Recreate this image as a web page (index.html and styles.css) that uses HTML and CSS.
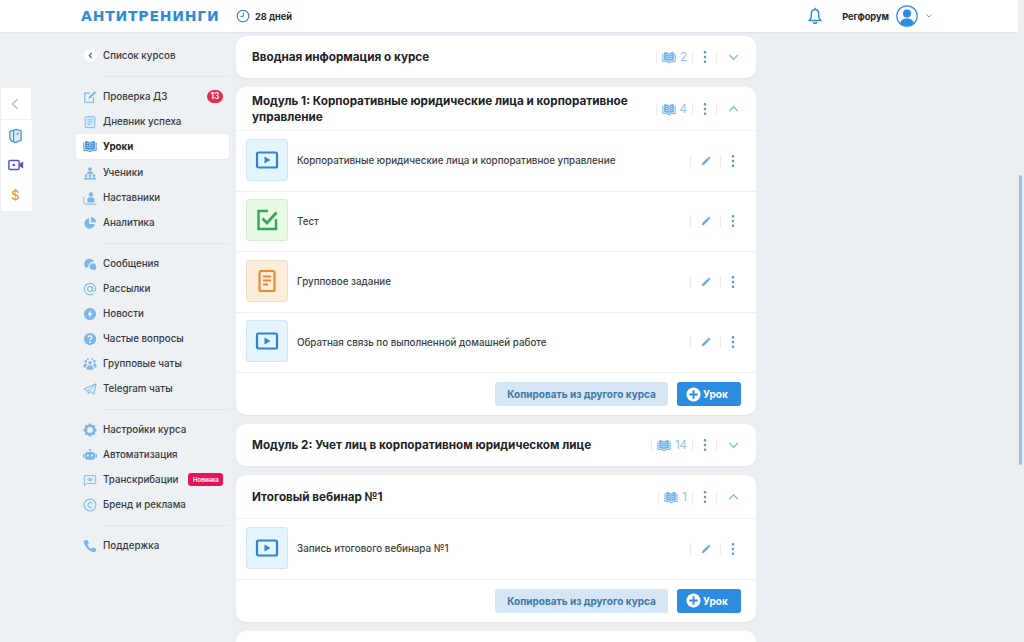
FILE: index.html
```html
<!DOCTYPE html>
<html lang="ru">
<head>
<meta charset="utf-8">
<title>Антитренинги</title>
<link rel="stylesheet" href="styles.css">
</head>
<body>
<svg class="defs" width="0" height="0" aria-hidden="true">
  <symbol id="i-book" viewBox="0 0 16 16"><path d="M8 4C6.500 2.600 4.500 2.300 2.500 2.500V12C4.500 11.800 6.500 12.100 8 13.400C9.500 12.100 11.500 11.800 13.500 12V2.500C11.500 2.300 9.500 2.600 8 4Z" fill="currentColor"/><path d="M8 4V13.400M4.200 5H6.500M4.200 7.300H6.500M4.200 9.600H6.500M9.500 5H11.800M9.500 7.300H11.800M9.500 9.600H11.800" stroke="#fff" stroke-width=".7" fill="none"/><path d="M1 4V13.300C3.500 13 6 13.300 8 14.500C10 13.300 12.500 13 15 13.300V4" stroke="currentColor" stroke-width="1.100" fill="none"/></symbol>
  <symbol id="i-dots" viewBox="0 0 4 16"><circle cx="2" cy="2.500" r="1.400" fill="currentColor"/><circle cx="2" cy="8" r="1.400" fill="currentColor"/><circle cx="2" cy="13.500" r="1.400" fill="currentColor"/></symbol>
  <symbol id="i-down" viewBox="0 0 12 8"><path d="M1.500 1.500L6 6L10.500 1.500" fill="none" stroke="currentColor" stroke-width="1.500" stroke-linecap="round"/></symbol>
  <symbol id="i-up" viewBox="0 0 12 8"><path d="M1.500 6.500L6 2L10.500 6.500" fill="none" stroke="currentColor" stroke-width="1.500" stroke-linecap="round"/></symbol>
  <symbol id="i-pen" viewBox="0 0 12 12"><path d="M8.800 1.500L10.500 3.200L4 9.700L1.800 10.200L2.300 8Z" fill="currentColor"/><path d="M7.500 2.800L9.200 4.500" stroke="#fff" stroke-width=".6"/></symbol>
  <symbol id="i-video" viewBox="0 0 24 20"><rect x="2" y="2.500" width="20" height="15" rx="1.500" fill="none" stroke="currentColor" stroke-width="2.200"/><path d="M9.500 6.500L15.500 10L9.500 13.500Z" fill="currentColor"/></symbol>
  <symbol id="i-test" viewBox="0 0 24 24"><path d="M13 3H3.500V21H21V11" fill="none" stroke="currentColor" stroke-width="2.400"/><path d="M7.500 10.500L12 15L21.500 4.500" fill="none" stroke="currentColor" stroke-width="2.800"/></symbol>
  <symbol id="i-task" viewBox="0 0 18 24"><rect x="1.500" y="2" width="15" height="20" rx="1.500" fill="none" stroke="currentColor" stroke-width="2.200"/><path d="M5 7.500H13M5 11.500H13M5 15.500H10" stroke="currentColor" stroke-width="1.800"/></symbol>
</svg>

<header class="topbar">
  <div class="brand">
    <span class="logo">АНТИТРЕНИНГИ</span>
    <svg class="clock" viewBox="0 0 14 14"><circle cx="7" cy="7" r="5.800" fill="none" stroke="currentColor" stroke-width="1.100"/><path d="M7.300 3.500V7.400H4.500" fill="none" stroke="currentColor" stroke-width="1"/></svg>
    <span class="days">28 дней</span>
  </div>
  <div class="account">
    <svg class="bell" viewBox="0 0 14 18"><path d="M7 2.500C4.500 2.500 3.300 4.500 3.300 6.800V10.300L1.300 13.500H12.700L10.700 10.300V6.800C10.700 4.500 9.500 2.500 7 2.500Z" fill="none" stroke="currentColor" stroke-width="1.400"/><path d="M5.300 15C5.600 16 6.200 16.500 7 16.500S8.400 16 8.700 15M7 .8V2.500" fill="none" stroke="currentColor" stroke-width="1.400"/></svg>
    <span class="user">Регфорум</span>
    <svg class="avatar" viewBox="0 0 22 22"><circle cx="11" cy="11" r="10.200" fill="#fff" stroke="#2b8ce0" stroke-width="1.200"/><circle cx="11" cy="8.500" r="4" fill="#2b8ce0"/><path d="M4 18.500C5 14.500 8 13.500 11 13.500S17 14.500 18 18.500C14.500 21.500 7.500 21.500 4 18.500Z" fill="#2b8ce0"/></svg>
    <svg class="caret"><use href="#i-down"/></svg>
  </div>
</header>

<div class="page">
  <div class="left">
    <aside class="rail">
      <div class="rail-back">
        <svg class="rail-arrow" viewBox="0 0 8 12"><path d="M6.500 1L1.500 6L6.500 11" fill="none" stroke="currentColor" stroke-width="1.300"/></svg>
      </div>
      <div class="rail-tools">
        <span class="rail-cell"><svg class="rail-ico blue" viewBox="0 0 16 18"><path d="M2 4.500L9 2.500L14 4V14L8 16.500L3.500 15L2 12Z" fill="#d9ebfa" stroke="currentColor" stroke-width="1.200"/><path d="M6 3.500V15.500M9.500 8L11 6" stroke="currentColor" stroke-width="1.200" fill="none"/></svg></span>
        <span class="rail-cell"><svg class="rail-ico violet" viewBox="0 0 18 14"><rect x="1" y="2" width="11.500" height="10" rx="1.200" fill="none" stroke="currentColor" stroke-width="1.600"/><circle cx="6.500" cy="7" r="1.500" fill="currentColor"/><path d="M13 5.500L17 3V11L13 8.500Z" fill="currentColor"/></svg></span>
        <span class="rail-cell rail-dollar">$</span>
      </div>
    </aside>

    <nav class="sidebar">
      <a class="nav-item">
        <span class="back-dot"><svg class="back-arrow" viewBox="0 0 6 8"><path d="M4.500 1L1.500 4L4.500 7" fill="none" stroke="currentColor" stroke-width="1.400"/></svg></span>
        <span class="nav-text">Список курсов</span>
      </a>
      <div class="divider"></div>

      <a class="nav-item">
        <svg class="nav-ico" viewBox="0 0 16 16"><path d="M12 8.500V14H2V3.500H8" fill="none" stroke="currentColor" stroke-width="1.300"/><path d="M13.500 1.500L15 3L8.500 9.500L6.300 10L6.800 7.800Z" fill="currentColor"/></svg>
        <span class="nav-text">Проверка ДЗ</span>
        <span class="count-badge">13</span>
      </a>
      <a class="nav-item">
        <svg class="nav-ico" viewBox="0 0 16 16"><rect x="2.500" y="2" width="11" height="12.500" rx="1" fill="#d9ebfa" stroke="currentColor" stroke-width="1.100"/><path d="M5 5.500H11M5 8H11M5 10.500H9" stroke="currentColor" stroke-width="1"/></svg>
        <span class="nav-text">Дневник успеха</span>
      </a>
      <a class="nav-item active">
        <svg class="nav-ico strong"><use href="#i-book"/></svg>
        <span class="nav-text">Уроки</span>
      </a>
      <a class="nav-item">
        <svg class="nav-ico" viewBox="0 0 16 16"><circle cx="8" cy="3.500" r="2.200" fill="currentColor"/><path d="M4.500 9C4.500 7 6 6.300 8 6.300S11.500 7 11.500 9Z" fill="currentColor"/><circle cx="3.500" cy="11" r="1.500" fill="currentColor"/><circle cx="8" cy="11" r="1.500" fill="currentColor"/><circle cx="12.500" cy="11" r="1.500" fill="currentColor"/><path d="M1 15.500C1 13.500 2 13 3.500 13S6 13.500 6 15.500ZM5.700 15.500C5.700 13.500 6.500 13 8 13S10.300 13.500 10.300 15.500ZM10 15.500C10 13.500 11 13 12.500 13S15 13.500 15 15.500Z" fill="currentColor"/></svg>
        <span class="nav-text">Ученики</span>
      </a>
      <a class="nav-item">
        <svg class="nav-ico" viewBox="0 0 16 16"><circle cx="9" cy="4" r="2.500" fill="currentColor"/><path d="M5 13V9.500C5 8 6.800 7 9 7S13 8 13 9.500V13Z" fill="currentColor"/><path d="M1 7V13.500C1 14.500 2 15 3 15H15" fill="none" stroke="currentColor" stroke-width="1.100"/></svg>
        <span class="nav-text">Наставники</span>
      </a>
      <a class="nav-item">
        <svg class="nav-ico" viewBox="0 0 16 16"><path d="M7 2.500A6 6 0 1 0 13.500 9H7Z" fill="currentColor"/><path d="M9 1A6 6 0 0 1 15 7H9Z" fill="currentColor"/></svg>
        <span class="nav-text">Аналитика</span>
      </a>
      <div class="divider"></div>

      <a class="nav-item">
        <svg class="nav-ico" viewBox="0 0 16 16"><path d="M1.500 8C1.500 4.500 4 2 7.500 2C10 2 12 3.500 12.500 5.500C9 5.300 6.300 7.500 6 11.500L3 12.500C2 11.300 1.500 9.800 1.500 8Z" fill="currentColor"/><path d="M7.500 11C7.500 8.500 9.500 7 11.500 7S15 8.500 15 11V14.500H11C9 14.500 7.500 13 7.500 11Z" fill="currentColor"/></svg>
        <span class="nav-text">Сообщения</span>
      </a>
      <a class="nav-item">
        <svg class="nav-ico" viewBox="0 0 16 16"><circle cx="8" cy="8" r="2.800" fill="none" stroke="currentColor" stroke-width="1.200"/><path d="M10.800 5.500V9C10.800 11 14.500 11 14.500 8A6.500 6.500 0 1 0 11.500 13.500" fill="none" stroke="currentColor" stroke-width="1.200"/></svg>
        <span class="nav-text">Рассылки</span>
      </a>
      <a class="nav-item">
        <svg class="nav-ico" viewBox="0 0 16 16"><circle cx="8" cy="8" r="7" fill="currentColor"/><path d="M8.700 3.500L5.500 8.800H7.700L7.200 12.500L10.500 7.200H8.200Z" fill="#fff"/></svg>
        <span class="nav-text">Новости</span>
      </a>
      <a class="nav-item">
        <svg class="nav-ico" viewBox="0 0 16 16"><circle cx="8" cy="8" r="7" fill="currentColor"/><path d="M5.800 6.300C5.800 5 6.800 4.300 8 4.300S10.200 5 10.200 6.300C10.200 7.800 8 7.800 8 9.500" fill="none" stroke="#fff" stroke-width="1.400"/><circle cx="8" cy="11.600" r="1" fill="#fff"/></svg>
        <span class="nav-text">Частые вопросы</span>
      </a>
      <a class="nav-item">
        <svg class="nav-ico" viewBox="0 0 16 16"><circle cx="8" cy="6.500" r="2" fill="currentColor"/><circle cx="3" cy="5" r="1.500" fill="currentColor"/><circle cx="13" cy="5" r="1.500" fill="currentColor"/><circle cx="5.500" cy="2.500" r="1" fill="currentColor"/><circle cx="10.500" cy="2.500" r="1" fill="currentColor"/><path d="M4 14.500C4 11 5.500 9.500 8 9.500S12 11 12 14.500ZM.5 12C.5 8.500 1.500 7.500 3 7.500C3.800 7.500 4.500 8 4.800 8.500C3.800 9.500 3.300 10.500 3.200 12ZM15.500 12C15.500 8.500 14.500 7.500 13 7.500C12.200 7.500 11.500 8 11.200 8.500C12.200 9.500 12.700 10.500 12.800 12Z" fill="currentColor"/></svg>
        <span class="nav-text">Групповые чаты</span>
      </a>
      <a class="nav-item">
        <svg class="nav-ico" viewBox="0 0 16 16"><path d="M1 8L15 2L12.500 14L8 11L6 13.500L5.500 10.500Z" fill="#d9ebfa" stroke="currentColor" stroke-width="1.100" stroke-linejoin="round"/><path d="M5.500 10.500L15 2" stroke="currentColor" stroke-width="1"/></svg>
        <span class="nav-text">Telegram чаты</span>
      </a>
      <div class="divider"></div>

      <a class="nav-item">
        <svg class="nav-ico" viewBox="0 0 16 16"><circle cx="8" cy="8" r="5" fill="none" stroke="currentColor" stroke-width="3.200"/><path d="M8 .5V3M8 13V15.500M.5 8H3M13 8H15.500M2.700 2.700L4.500 4.500M11.500 11.500L13.300 13.300M2.700 13.300L4.500 11.500M11.500 4.500L13.300 2.700" stroke="currentColor" stroke-width="2.200"/></svg>
        <span class="nav-text">Настройки курса</span>
      </a>
      <a class="nav-item">
        <svg class="nav-ico" viewBox="0 0 16 16"><rect x="2" y="4.500" width="12" height="9" rx="3.500" fill="currentColor"/><circle cx="8" cy="2.500" r="1.300" fill="currentColor"/><rect x="0" y="7" width="1.500" height="4" fill="currentColor"/><rect x="14.500" y="7" width="1.500" height="4" fill="currentColor"/><circle cx="5.500" cy="8.500" r="1.100" fill="#fff"/><circle cx="10.500" cy="8.500" r="1.100" fill="#fff"/></svg>
        <span class="nav-text">Автоматизация</span>
      </a>
      <a class="nav-item">
        <svg class="nav-ico" viewBox="0 0 16 16"><path d="M1.500 3H14.500V12H4L1.500 14.500Z" fill="#e3f0fb" stroke="currentColor" stroke-width="1"/><path d="M5 7.500C6 5.800 10 5.800 11 7.500C10 9.200 6 9.200 5 7.500Z" fill="none" stroke="currentColor" stroke-width=".9"/><circle cx="8" cy="7.500" r="1" fill="currentColor"/></svg>
        <span class="nav-text">Транскрибации</span>
        <span class="new-badge">Новинка</span>
      </a>
      <a class="nav-item">
        <svg class="nav-ico" viewBox="0 0 16 16"><circle cx="8" cy="8" r="6.800" fill="#e3f0fb" stroke="currentColor" stroke-width="1.200"/><path d="M10.300 6C9.300 4.700 5.700 4.800 5.700 8S9.300 11.300 10.300 10" fill="none" stroke="currentColor" stroke-width="1.200"/></svg>
        <span class="nav-text">Бренд и реклама</span>
      </a>
      <div class="divider"></div>

      <a class="nav-item">
        <svg class="nav-ico" viewBox="0 0 16 16"><path d="M2 1.500L5 1L6.800 5L5 6.500C5.800 8.300 7.500 10 9.500 11L11 9.300L15 11L14.500 14C14.300 15 13 15.500 12 15C6.500 13.500 2.500 9.500 1 4C.7 3 1 2 2 1.500Z" fill="currentColor"/></svg>
        <span class="nav-text">Поддержка</span>
      </a>
    </nav>
  </div>

  <main class="course">
    <section class="card">
      <div class="card-head">
        <h2 class="card-title">Вводная информация о курсе</h2>
        <div class="head-tools">
          <i class="sep"></i><svg class="book"><use href="#i-book"/></svg><span class="lesson-count">2</span><i class="sep"></i>
          <span class="dots-cell"><svg class="dots"><use href="#i-dots"/></svg></span><i class="sep"></i>
          <span class="chev-cell"><svg class="chev"><use href="#i-down"/></svg></span>
        </div>
      </div>
    </section>

    <section class="card">
      <div class="card-head open">
        <h2 class="card-title">Модуль 1: Корпоративные юридические лица и корпоративное управление</h2>
        <div class="head-tools">
          <i class="sep"></i><svg class="book"><use href="#i-book"/></svg><span class="lesson-count">4</span><i class="sep"></i>
          <span class="dots-cell"><svg class="dots"><use href="#i-dots"/></svg></span><i class="sep"></i>
          <span class="chev-cell"><svg class="chev"><use href="#i-up"/></svg></span>
        </div>
      </div>
      <div class="lesson">
        <span class="thumb thumb-video"><svg class="thumb-ico"><use href="#i-video"/></svg></span>
        <span class="lesson-name">Корпоративные юридические лица и корпоративное управление</span>
        <div class="row-tools"><i class="sep"></i><span class="pen-cell"><svg class="pen"><use href="#i-pen"/></svg></span><i class="sep"></i><span class="row-dots"><svg class="dots"><use href="#i-dots"/></svg></span></div>
      </div>
      <div class="lesson">
        <span class="thumb thumb-test"><svg class="thumb-ico"><use href="#i-test"/></svg></span>
        <span class="lesson-name">Тест</span>
        <div class="row-tools"><i class="sep"></i><span class="pen-cell"><svg class="pen"><use href="#i-pen"/></svg></span><i class="sep"></i><span class="row-dots"><svg class="dots"><use href="#i-dots"/></svg></span></div>
      </div>
      <div class="lesson">
        <span class="thumb thumb-task"><svg class="thumb-ico"><use href="#i-task"/></svg></span>
        <span class="lesson-name">Групповое задание</span>
        <div class="row-tools"><i class="sep"></i><span class="pen-cell"><svg class="pen"><use href="#i-pen"/></svg></span><i class="sep"></i><span class="row-dots"><svg class="dots"><use href="#i-dots"/></svg></span></div>
      </div>
      <div class="lesson">
        <span class="thumb thumb-video"><svg class="thumb-ico"><use href="#i-video"/></svg></span>
        <span class="lesson-name">Обратная связь по выполненной домашней работе</span>
        <div class="row-tools"><i class="sep"></i><span class="pen-cell"><svg class="pen"><use href="#i-pen"/></svg></span><i class="sep"></i><span class="row-dots"><svg class="dots"><use href="#i-dots"/></svg></span></div>
      </div>
      <div class="card-foot">
        <button class="btn-copy">Копировать из другого курса</button>
        <button class="btn-add"><svg class="plus" viewBox="0 0 16 16"><circle cx="8" cy="8" r="7.500" fill="#fff"/><path d="M8 3.500V12.500M3.500 8H12.500" stroke="#2b8ce0" stroke-width="2"/></svg>Урок</button>
      </div>
    </section>

    <section class="card">
      <div class="card-head">
        <h2 class="card-title">Модуль 2: Учет лиц в корпоративном юридическом лице</h2>
        <div class="head-tools">
          <i class="sep"></i><svg class="book"><use href="#i-book"/></svg><span class="lesson-count">14</span><i class="sep"></i>
          <span class="dots-cell"><svg class="dots"><use href="#i-dots"/></svg></span><i class="sep"></i>
          <span class="chev-cell"><svg class="chev"><use href="#i-down"/></svg></span>
        </div>
      </div>
    </section>

    <section class="card">
      <div class="card-head open">
        <h2 class="card-title">Итоговый вебинар №1</h2>
        <div class="head-tools">
          <i class="sep"></i><svg class="book"><use href="#i-book"/></svg><span class="lesson-count">1</span><i class="sep"></i>
          <span class="dots-cell"><svg class="dots"><use href="#i-dots"/></svg></span><i class="sep"></i>
          <span class="chev-cell"><svg class="chev"><use href="#i-up"/></svg></span>
        </div>
      </div>
      <div class="lesson">
        <span class="thumb thumb-video"><svg class="thumb-ico"><use href="#i-video"/></svg></span>
        <span class="lesson-name">Запись итогового вебинара №1</span>
        <div class="row-tools"><i class="sep"></i><span class="pen-cell"><svg class="pen"><use href="#i-pen"/></svg></span><i class="sep"></i><span class="row-dots"><svg class="dots"><use href="#i-dots"/></svg></span></div>
      </div>
      <div class="card-foot">
        <button class="btn-copy">Копировать из другого курса</button>
        <button class="btn-add"><svg class="plus" viewBox="0 0 16 16"><circle cx="8" cy="8" r="7.500" fill="#fff"/><path d="M8 3.500V12.500M3.500 8H12.500" stroke="#2b8ce0" stroke-width="2"/></svg>Урок</button>
      </div>
    </section>

    <section class="card card-tail"></section>
  </main>
</div>
<div class="scroll-thumb"></div>
</body>
</html>
```

FILE: styles.css
```css
* { box-sizing: border-box; }
html, body { margin: 0; height: 642px; overflow: hidden; }
body {
  background: #ebeef2;
  font-family: Inter, "Noto Sans", sans-serif;
  color: #2a2f36;
  font-size: 10px;
}
.defs { position: absolute; }

/* top bar */
.topbar {
  width: 1018px;
  height: 32px;
  background: #fff;
  display: flex;
  align-items: center;
  justify-content: space-between;
  padding: 0 86px 0 81px;
  box-shadow: 0 1px 1px rgba(40, 60, 90, .05);
  position: relative;
}
.brand, .account { display: flex; align-items: center; }
.logo {
  font-family: "DejaVu Sans", sans-serif;
  font-weight: 700;
  font-size: 14px;
  letter-spacing: .8px;
  color: #2d8ad9;
  width: 139px;
  white-space: nowrap;
}
.clock { width: 14px; height: 14px; margin-left: 16px; color: #2f7fc4; }
.days { margin-left: 5px; font-size: 9.2px; font-weight: 700; color: #23272d; }
.bell { width: 14px; height: 18px; color: #2b8ce0; }
.user { margin-left: 20px; font-size: 9.2px; font-weight: 700; color: #1f2328; }
.avatar { width: 22px; height: 22px; margin-left: 7px; }
.caret { width: 6px; height: 4px; margin-left: 8px; color: #3f86c6; }

/* layout */
.page { display: flex; height: 610px; }
.left { width: 232px; height: 610px; background: #eef1f4; display: flex; flex: none; }

/* rail */
.rail { width: 31px; margin: 56px 0 0 1px; flex: none; }
.rail-back {
  height: 31px;
  width: 30px;
  padding-right: 2px;
  background: #fff;
  display: flex;
  align-items: center;
  justify-content: center;
  margin-bottom: 1px;
}
.rail-arrow { width: 8px; height: 12px; color: #b9bec4; }
.rail-tools {
  height: 91px;
  background: #fff;
  display: flex;
  flex-direction: column;
  border-radius: 0 0 2px 2px;
}
.rail-cell { height: 30px; padding-right: 2px; display: flex; align-items: center; justify-content: center; }
.rail-ico { width: 15px; height: 17px; display: block; }
.rail-ico.blue { color: #3a8ad0; }
.rail-ico.violet { color: #4c55c7; width: 16px; height: 14px; }
.rail-dollar { font-size: 13px; font-weight: 500; color: #ef9a3c; }

/* sidebar */
.sidebar { width: 153px; margin-left: 44px; padding-top: 11px; flex: none; }
.nav-item {
  display: flex;
  align-items: center;
  height: 25px;
  padding-left: 7px;
  font-size: 9.75px;
  font-weight: 500;
  color: #343a42;
  white-space: nowrap;
}
.nav-ico { width: 14px; height: 14px; color: #7db6e8; flex: none; }
.nav-ico.strong { color: #3f8fd6; }
.nav-text { margin-left: 6px; }
.nav-item.active {
  background: #fff;
  margin: -.5px 0 1.5px;
  border-radius: 3px;
  font-weight: 700;
  color: #23272d;
  box-shadow: 0 0 1px rgba(40, 60, 90, .2);
}
.back-dot {
  width: 13px;
  height: 13px;
  border-radius: 50%;
  background: #fff;
  display: flex;
  align-items: center;
  justify-content: center;
  flex: none;
  margin-left: 1px;
}
.back-arrow { width: 5px; height: 7px; color: #2f7fc4; }
.back-dot + .nav-text { margin-left: 6px; }
.divider { height: 1px; margin: 7.5px 0 7.5px 27px; background: #e2e5e9; }
.count-badge {
  margin-left: auto;
  margin-right: 6px;
  width: 16px;
  height: 13px;
  border-radius: 7px;
  background: #e6294f;
  color: #fff;
  font-size: 8.5px;
  font-weight: 600;
  line-height: 13px;
  text-align: center;
}
.new-badge {
  margin-left: 10px;
  width: 35px;
  height: 13px;
  border-radius: 3px;
  background: #e8145a;
  color: #fff;
  font-size: 6px;
  font-weight: 600;
  line-height: 13px;
  text-align: center;
}

/* course column */
.course {
  width: 520px;
  margin-left: 4px;
  padding-top: 4px;
  display: flex;
  flex-direction: column;
  gap: 9px;
  flex: none;
}
.card {
  background: #fff;
  border-radius: 10px;
  box-shadow: 0 1px 2px rgba(40, 60, 90, .05);
  flex: none;
}
.card-tail { height: 30px; border-radius: 10px 10px 0 0; }
.card-head {
  height: 42px;
  display: flex;
  align-items: center;
  padding-left: 16px;
}
.card-head.open { height: 43px; }
.card-title {
  margin: 0;
  flex: 1;
  min-width: 0;
  max-width: 393px;
  font-size: 11.7px;
  font-weight: 700;
  line-height: 16px;
  color: #1e2227;
}
.head-tools {
  margin-left: auto;
  display: flex;
  align-items: center;
  height: 14px;
}
.sep { display: block; width: 1px; height: 12px; background: #e6ecf2; flex: none; }
.book { width: 14px; height: 14px; margin-left: 5px; color: #6aaee5; }
.lesson-count { margin: 0 5px 0 4px; font-size: 11.5px; color: #93bfe6; }
.dots-cell { width: 23px; display: flex; justify-content: center; }
.dots { width: 4px; height: 14px; color: #5f93c2; display: block; }
.chev-cell { width: 39px; padding-right: 7px; display: flex; justify-content: center; }
.chev { width: 11px; height: 7px; color: #8dbce6; }

/* lessons */
.lesson {
  height: 60.5px;
  border-top: 1px solid #eef0f3;
  display: flex;
  align-items: center;
  padding: 0 11px 0 10px;
}
.thumb {
  width: 42px;
  height: 42px;
  margin-bottom: 2px;
  border-radius: 3px;
  display: flex;
  align-items: center;
  justify-content: center;
  flex: none;
}
.thumb-video { background: #e3f4fd; border: 1px solid #d5e6ef; color: #2f83cf; }
.thumb-test { background: #e6f9e5; border: 1px solid #d8ebd7; color: #36a85a; }
.thumb-task { background: #fbedd9; border: 1px solid #eedfca; color: #e98a2f; }
.thumb-ico { width: 24px; height: 24px; }
.lesson-name { margin-left: 9px; font-size: 9.8px; font-weight: 500; color: #3a3f46; white-space: nowrap; }
.row-tools { margin-left: auto; display: flex; align-items: center; }
.pen-cell { width: 29px; display: flex; justify-content: center; }
.pen { width: 12px; height: 12px; color: #6fa9de; }
.row-dots { width: 24px; display: flex; justify-content: center; }

.card-foot {
  height: 43px;
  border-top: 1px solid #eef0f3;
  display: flex;
  align-items: center;
  justify-content: flex-end;
  gap: 9px;
  padding: 0 15px 0 0;
}
.btn-copy, .btn-add {
  border: 0;
  height: 24px;
  border-radius: 3px;
  font-family: inherit;
  font-weight: 700;
  font-size: 10px;
  padding: 0;
}
.btn-copy { width: 173px; background: #d5e6f5; color: #3d78ad; }
.btn-add {
  width: 64px;
  background: #2b8ce0;
  color: #fff;
  display: flex;
  align-items: center;
  padding-left: 9px;
  gap: 2px;
}
.plus { width: 15px; height: 15px; }

.scroll-thumb {
  position: absolute;
  left: 1019px;
  top: 175px;
  width: 3px;
  height: 290px;
  background: #93c3ea;
  border-radius: 2px;
}
```
